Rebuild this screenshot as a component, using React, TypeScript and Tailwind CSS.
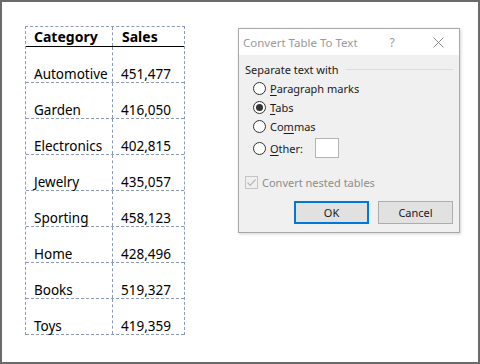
import type { FC } from 'react';

const rows = [
  { category: 'Automotive', sales: '451,477' },
  { category: 'Garden', sales: '416,050' },
  { category: 'Electronics', sales: '402,815' },
  { category: 'Jewelry', sales: '435,057' },
  { category: 'Sporting', sales: '458,123' },
  { category: 'Home', sales: '428,496' },
  { category: 'Books', sales: '519,327' },
  { category: 'Toys', sales: '419,359' },
];

const Radio: FC<{ checked?: boolean }> = ({ checked = false }) => (
  <span className="flex h-[13px] w-[13px] shrink-0 items-center justify-center rounded-full border border-[#333] bg-white">
    {checked && <span className="h-[7px] w-[7px] rounded-full bg-[#333]" />}
  </span>
);

const RadioRow: FC<{ checked?: boolean; accessKey: string; before?: string; after: string }> = ({
  checked,
  accessKey,
  before = '',
  after,
}) => (
  <div className="flex h-[19px] items-center">
    <Radio checked={checked} />
    <span className="ml-[4px] text-[#1a1a1a]">
      {before}
      <span className="underline underline-offset-2">{accessKey}</span>
      {after}
    </span>
  </div>
);

const Dialog: FC = () => (
  <div
    className="absolute left-[236px] top-[26px] flex h-[205px] w-[222px] flex-col border border-[#a8a8a8] bg-[#f0f0f0] text-[11px] leading-[15px] shadow-[1px_1px_3px_rgba(0,0,0,0.18)]"
    style={{ fontFamily: '"Noto Sans", sans-serif' }}
  >
    {/* Title bar */}
    <div className="flex h-[26px] items-center bg-white pl-[4px] text-[#9a9a9a]">
      <span className="text-[11.5px]">Convert Table To Text</span>
      <span className="ml-[32px] text-[12px]">?</span>
      <svg className="ml-[38px]" width="11" height="11" viewBox="0 0 11 11">
        <path d="M0.5 0.5 L10.5 10.5 M10.5 0.5 L0.5 10.5" stroke="#8a8a8a" strokeWidth="1" />
      </svg>
    </div>

    {/* Body */}
    <div className="flex flex-1 flex-col px-[6px] pt-[6px]">
      <div className="flex h-[16px] items-center text-[#1a1a1a]">
        <span>Separate text with</span>
        <span className="ml-[7px] h-px flex-1 bg-[#dcdcdc]" />
      </div>

      <div className="mt-[2px] flex flex-col pl-[8px]">
        <RadioRow accessKey="P" after="aragraph marks" />
        <RadioRow checked accessKey="T" after="abs" />
        <RadioRow before="Co" accessKey="m" after="mas" />
        <div className="mt-[2px] flex h-[20px] items-center">
          <Radio />
          <span className="ml-[4px] text-[#1a1a1a]">
            <span className="underline underline-offset-2">O</span>ther:
          </span>
          <span className="ml-[12px] h-[20px] w-[24px] border border-[#b4b4b4] bg-white" />
        </div>
      </div>

      <div className="mt-[18px] flex h-[13px] items-center">
        <span className="flex h-[13px] w-[13px] items-center justify-center border border-[#c4c4c4] bg-[#f0f0f0]">
          <svg width="11" height="11" viewBox="0 0 11 11">
            <path d="M1.5 5.5 L4.2 8.3 L9.5 2.5" fill="none" stroke="#b8b8b8" strokeWidth="1.2" />
          </svg>
        </span>
        <span className="ml-[4px] text-[#8d8d8d]">Convert nested tables</span>
      </div>

      <div className="mt-[12px] flex justify-end gap-[9px]">
        <button className="flex h-[23px] w-[75px] items-center justify-center border-2 border-[#0078d7] bg-[#e1e1e1] text-[#1a1a1a]">
          OK
        </button>
        <button className="flex h-[23px] w-[75px] items-center justify-center border border-[#adadad] bg-[#e1e1e1] text-[#1a1a1a]">
          Cancel
        </button>
      </div>
    </div>
  </div>
);

export default function App() {
  return (
    <div
      className="relative h-[364px] w-[480px] border-2 border-[#6b6b6b] bg-white"
      style={{ fontFamily: '"Noto Sans", sans-serif' }}
    >
      <div className="ml-[23px] mt-[24px] w-[160px] border border-dashed border-[#8c9cb8] border-b-0 text-black">
        <div className="flex h-[20px] border-b border-black text-[14px] font-bold leading-[17px]">
          <div className="flex w-[87px] items-center border-r border-dashed border-[#8c9cb8] pl-[8px]">Category</div>
          <div className="flex flex-1 items-center pl-[9px]">Sales</div>
        </div>
        {rows.map((r) => (
          <div key={r.category} className="flex h-[36px] border-b border-dashed border-[#8c9cb8] text-[13.5px] leading-[16px]">
            <div className="flex w-[87px] items-end border-r border-dashed border-[#8c9cb8] pl-[8px]">
              {r.category}
            </div>
            <div className="flex flex-1 items-end pl-[8px]">{r.sales}</div>
          </div>
        ))}
      </div>
      <Dialog />
    </div>
  );
}
